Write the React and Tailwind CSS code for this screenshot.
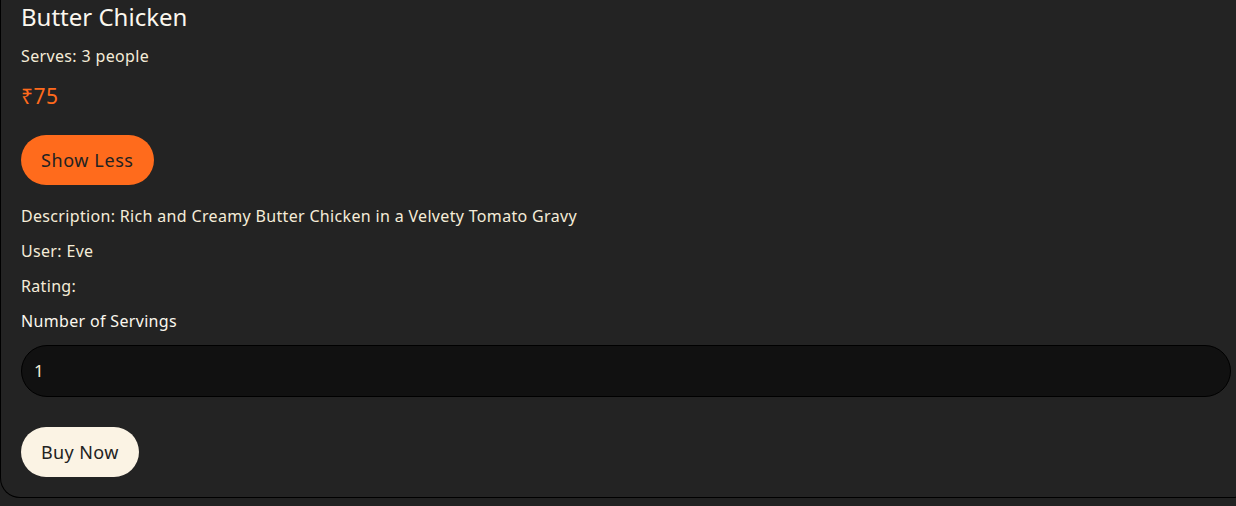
export default function App() {
  const body = { fontFamily: '"Noto Sans", "Open Sans", sans-serif' };
  return (
    <div className="min-h-[506px] w-[1236px] overflow-hidden bg-[#222222]" style={body}>
      <div className="w-[1253px] rounded-b-[20px] border-x border-b border-black bg-[#232323] px-5 pb-5 pt-[1px]">
        <h2 className="text-[24px] leading-8 text-[#fbf7ee]">Butter Chicken</h2>
        <p className="mt-[11px] text-[16px] leading-6 tracking-[0.35px] text-[#f5ecd8]">Serves: 3 people</p>
        <p className="mt-[14px] text-[21px] leading-7 tracking-[0.5px] text-[#ff6a1c]">₹75</p>
        <button className="mt-[25px] h-[50px] rounded-full bg-[#ff6b1c] px-5 text-[18px] tracking-[0.6px] text-[#222]">
          Show Less
        </button>
        <p className="mt-[19px] text-[16px] leading-6 tracking-[0.33px] text-[#f5ecd8]">
          Description: Rich and Creamy Butter Chicken in a Velvety Tomato Gravy
        </p>
        <p className="mt-[11px] text-[16px] leading-6 tracking-[0.33px] text-[#f5ecd8]">User: Eve</p>
        <p className="mt-[11px] text-[16px] leading-6 tracking-[0.33px] text-[#f5ecd8]">Rating:</p>
        <p className="mt-[11px] text-[16px] leading-6 tracking-[0.33px] text-[#fbf7ee]">Number of Servings</p>
        <div className="mt-[12px] flex h-[52px] w-[1210px] items-center rounded-full border border-black bg-[#111111] px-3 text-[17px] text-[#f5ecd8]">
          1
        </div>
        <button className="mt-[30px] h-[50px] rounded-full bg-[#fbf3e4] px-5 text-[18px] tracking-[0.4px] text-[#222]">
          Buy Now
        </button>
      </div>
    </div>
  );
}
